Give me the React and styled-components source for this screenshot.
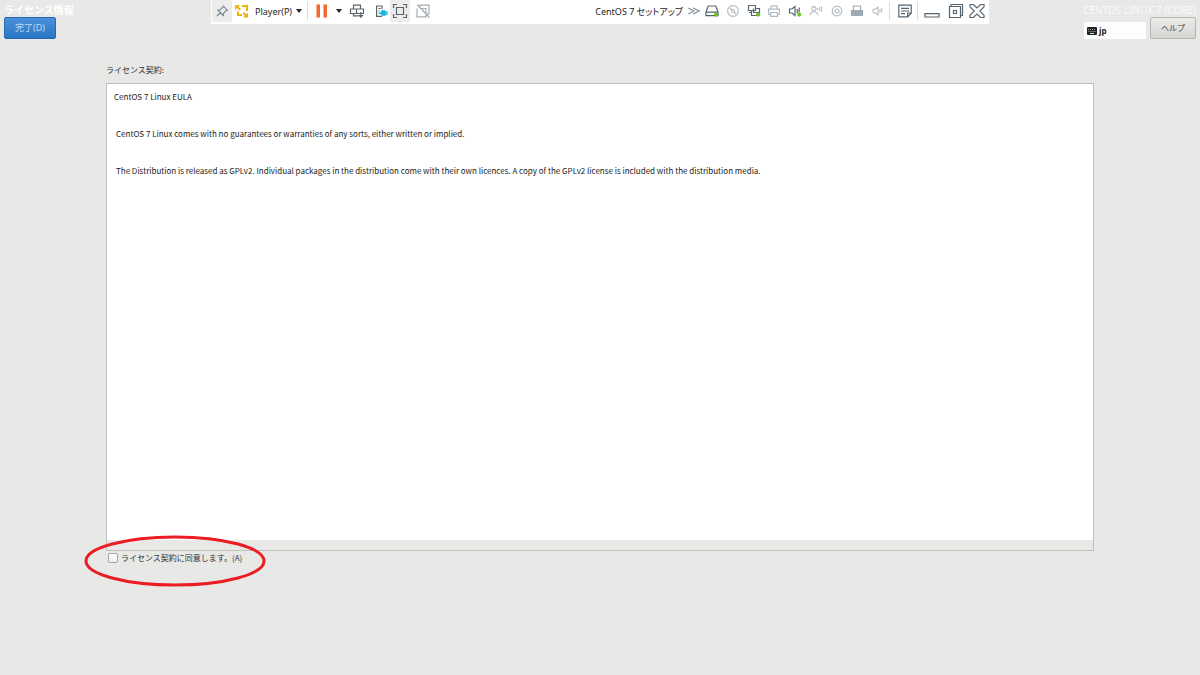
import React, { useState } from 'react';
import styled, { createGlobalStyle } from 'styled-components';

const GlobalStyle = createGlobalStyle`
  * {
    box-sizing: border-box;
  }
  body {
    margin: 0;
    background-color: #e8e8e6;
    font-family: 'Noto Sans', 'Noto Sans CJK JP', sans-serif;
    font-size: 8px;
    color: #2e3436;
  }
  button {
    font-family: inherit;
    cursor: pointer;
  }
`;

const Page = styled.div`
  display: flex;
  flex-direction: column;
  min-height: 100vh;
`;

const Header = styled.header`
  display: grid;
  grid-template-columns: 211fr 778fr 211fr;
  align-items: start;
`;

const HeaderSide = styled.div`
  display: flex;
  flex-direction: column;
  align-items: ${(props) => (props.$end ? 'flex-end' : 'flex-start')};
  padding: 3px 4px 0;
`;

const SpokeTitle = styled.h1`
  margin: 0;
  height: 14px;
  font-size: 10px;
  line-height: 14px;
  font-weight: bold;
  color: #fff;
  white-space: nowrap;
`;

const ProductName = styled.div`
  height: 14px;
  font-size: 10px;
  line-height: 14px;
  color: #fbfbfb;
  white-space: nowrap;
`;

const HeaderActions = styled.div`
  display: flex;
  align-items: flex-end;
  gap: 4px;
`;

const PushButton = styled.button`
  height: 22px;
  width: ${(props) => (props.$primary ? '52px' : '46px')};
  padding: 0;
  font-size: ${(props) => (props.$primary ? '9px' : '8px')};
  line-height: 12px;
  border-radius: 2px;
  color: ${(props) => (props.$primary ? '#c3daf1' : '#3f4547')};
  border: 1px solid ${(props) => (props.$primary ? '#2767ab' : '#b4b4b0')};
  background: ${(props) =>
    props.$primary
      ? 'linear-gradient(#4a90d9, #2a76c6)'
      : 'linear-gradient(#ebebea, #d5d5d3)'};
`;

const LayoutButton = styled.button`
  display: flex;
  align-items: center;
  gap: 2px;
  width: 62px;
  height: 17px;
  padding: 0 3px;
  border: none;
  border-radius: 1px;
  background-color: #fdfdfd;
  font-size: 8px;
  font-weight: bold;
  line-height: 12px;
  color: #222;
`;

const Toolbar = styled.div`
  display: flex;
  justify-content: space-between;
  height: 24px;
  padding: 0 1px;
  background-color: #fff;
`;

const ToolGroup = styled.div`
  display: flex;
  align-items: center;
  height: 22px;
`;

const DeviceGroup = styled(ToolGroup)`
  justify-content: space-between;
  width: 182px;
`;

const ToolButton = styled.button`
  display: flex;
  align-items: center;
  justify-content: center;
  flex: none;
  width: ${(props) => props.$width || 16}px;
  height: 22px;
  padding: 0;
  border: none;
  border-radius: 1px;
  background-color: ${(props) => (props.$active ? '#ececec' : 'transparent')};
`;

const PlayerButton = styled.button`
  display: flex;
  align-items: center;
  gap: 4px;
  height: 22px;
  padding: 0 5px 0 4px;
  border: none;
  background: none;
  font-size: 9px;
  color: #222;
`;

const VmName = styled.span`
  margin-right: 1px;
  font-size: 9px;
  font-feature-settings: 'palt';
  color: #222;
  white-space: nowrap;
`;

const Divider = styled.span`
  width: 1px;
  height: 18px;
  margin: 0 ${(props) => props.$gap}px;
  background-color: #dcdcdc;
`;

const Content = styled.main`
  display: flex;
  flex: 1;
  flex-direction: column;
  padding: 25px 106px 110px;
  font-family: 'Noto Sans CJK JP', sans-serif;
`;

const SectionLabel = styled.h2`
  margin: 0 0 7px;
  font-size: 8px;
  line-height: 12px;
  font-weight: normal;
`;

const LicenseFrame = styled.section`
  display: flex;
  flex: 1;
  flex-direction: column;
  border: 1px solid #c0c0bd;
`;

const LicenseText = styled.div`
  flex: 1;
  padding: 7px;
  background-color: #fff;
  color: #1a1a1a;
`;

const Paragraph = styled.p`
  margin: 0 0 25px;
  padding-left: ${(props) => (props.$indent ? '2px' : '0')};
  line-height: 12px;
`;

const ScrollTrack = styled.div`
  height: 10px;
  background-color: #e8e8e6;
`;

const AgreeRow = styled.div`
  position: relative;
  display: flex;
  align-self: flex-start;
  align-items: center;
  gap: 3px;
  height: 14px;
  padding-left: 2px;
`;

const Checkbox = styled.input`
  appearance: none;
  width: 10px;
  height: 10px;
  margin: 0;
  border: 1px solid #a3a39f;
  border-radius: 2px;
  background: linear-gradient(#fff, #f0f0ef);
  &:checked {
    background: #4a90d9;
  }
`;

const AgreeLabel = styled.label`
  font-size: 8px;
  line-height: 12px;
  white-space: nowrap;
`;

const Highlight = styled.svg`
  position: absolute;
  top: -16px;
  left: -22px;
  pointer-events: none;
`;

const DARK = '#566570';
const LIGHT = '#b4bcc3';
const GREEN = '#6cc31c';

const Icon = ({ size = 16, color = DARK, children }) => (
  <svg width={size} height={size} viewBox="0 0 16 16" fill="none" stroke={color} strokeWidth="1.2" aria-hidden="true">
    {children}
  </svg>
);

const Caret = () => (
  <svg width="6" height="4" viewBox="0 0 6 4" aria-hidden="true">
    <path d="M0 0h6L3 4z" fill="#222" />
  </svg>
);

const Dot = () => <circle cx="12.2" cy="11.6" r="2.1" fill={GREEN} stroke="none" />;

const PinIcon = () => (
  <Icon color="#77838e">
    <path d="M9.3 3.2l4 4-1.3.6-2.4 2.4-.4 2.3-5.3-5.3 2.3-.4 2.4-2.4zM6.2 9.9L3 13" />
  </Icon>
);

const ArrowsIcon = () => (
  <Icon color="#efb310">
    <g fill="#efb310" stroke="none">
      <path d="M1 2h5L4.500 3.500 7 6 5.500 7.500 3 5 1 7zM14 14.500H9l1.700-1.700L8.500 10.600l1.600-1.600 2.200 2.200L14 9.500z" />
      <path d="M8 2h6v6h-2V4H8zM3 8.500h2V11h3v2H3z" />
    </g>
  </Icon>
);

const PauseIcon = () => (
  <Icon>
    <path d="M2.500 1.500H6v13H2.500zM9.500 1.500H13v13H9.500z" fill="#f26a2e" stroke="none" />
  </Icon>
);

const SendKeysIcon = () => (
  <Icon>
    <path d="M4.500 6V2.200h7V6M1.500 6h6v4.500h-6zM7.500 6h7v4.500h-7zM4.500 10.500v2.300h5M11.800 9v4.500" />
    <path d="M9 12h5.600l-2.800 3z" fill={DARK} stroke="none" />
  </Icon>
);

const RemovableIcon = () => (
  <Icon>
    <path d="M9 6V3H3.6v10.400H9M5.500 5.500h2M5.500 8h1" />
    <path d="M6 9.500h2.500V7.400H12v1.300h2.400v1H12v1h2.400v1H12v.900H8.500v-1.800H6z" fill="#12b5da" stroke="#12b5da" strokeWidth=".6" />
  </Icon>
);

const FullscreenIcon = () => (
  <Icon>
    <path d="M1.500 5V1.500H5M11 1.500h3.500V5M14.500 11v3.500H11M5 14.500H1.500V11M4.500 4.500h7v7h-7z" />
  </Icon>
);

const UnityIcon = () => (
  <Icon color="#a5adb4">
    <path d="M5 5V2.200h9V11h-2.500M2 5.500v8.300h9V5.500H6M2 1.500l12.500 13" />
  </Icon>
);

const ChevronsIcon = () => (
  <Icon size={14} color="#7d8890">
    <path d="M1.500 4.500L8 8l-6.500 3.500M7 4.500L14 8l-7 3.500" />
  </Icon>
);

const DiskIcon = () => (
  <Icon>
    <path d="M4.200 3h7.600L14 9v3.600H2V9zM2 9.200h12" />
    <Dot />
  </Icon>
);

const DiscIcon = () => (
  <Icon color={LIGHT}>
    <circle cx="8" cy="8" r="5.400" />
    <circle cx="8" cy="8" r="1.500" />
    <path d="M5 5l2 2M9 9l2 2" />
  </Icon>
);

const NetworkIcon = () => (
  <Icon>
    <path d="M2.500 2.500h7v5h-7zM5.500 7.500v5h8V5.500H9.500M5.500 9.500H3M7.500 5.500v4h6" />
    <Dot />
  </Icon>
);

const PrinterIcon = () => (
  <Icon color={LIGHT}>
    <path d="M5 6V2.800h6V6M4.500 11.500H2.600V6.200h10.800v5.300h-1.900M4.600 9.500h6.800v3.800H4.600z" />
  </Icon>
);

const SoundIcon = ({ active }) => (
  <Icon color={active ? DARK : LIGHT} size={active ? 16 : 14}>
    <path d="M2.500 6h2.500L8 3.500v9L5 10H2.500zM10.200 6v4M12.200 4.500v5" />
    {active && <Dot />}
  </Icon>
);

const VoiceIcon = () => (
  <Icon color={LIGHT} size={14}>
    <circle cx="5.600" cy="5.400" r="2.400" />
    <path d="M1.200 13c0-3 1.600-4.200 4.400-4.200s4.400 1.200 4.400 4.200M10 4.500v2.500M12.200 3.500v4.500M14.400 2.500v6.500" />
  </Icon>
);

const CameraIcon = () => (
  <Icon color={LIGHT}>
    <circle cx="8" cy="8" r="4.800" />
    <circle cx="8" cy="8" r="2" />
  </Icon>
);

const FloppyIcon = () => (
  <Icon color="#9fa9b1">
    <path d="M4.500 7V3h7v4" />
    <path d="M2.500 7.500h11v5h-11z" fill="#9fa9b1" />
  </Icon>
);

const NoteIcon = () => (
  <Icon>
    <path d="M1.800 2.200h12.400v8l-3.400 3.600h-9zM14 10h-3.400v3.600M4 5.300h8M4 8h8M4 10.700h4" />
  </Icon>
);

const MinimizeIcon = () => (
  <Icon>
    <path d="M1 10.600h14v3.400H1z" />
  </Icon>
);

const RestoreIcon = () => (
  <Icon>
    <path d="M1.500 3.500h11v11h-11zM3 3.500v-2h11.500v11h-2M5.500 7.500h3v3h-3z" />
  </Icon>
);

const CloseIcon = () => (
  <Icon>
    <path d="M1 1.500h3.400L8 5l3.600-3.500H15v2.300L10.800 8l4.200 4.200v2.300h-3.400L8 11l-3.600 3.500H1v-2.300L5.200 8 1 3.800z" />
  </Icon>
);

const KeyboardIcon = () => (
  <svg width="10" height="8" viewBox="0 0 10 8" aria-hidden="true">
    <rect width="10" height="8" rx="1" fill="#222" />
    <path d="M1 2.500h8M1.500 4.500h7" stroke="#aaa" strokeDasharray="1 1" />
    <path d="M3 6.500h4" stroke="#ddd" />
  </svg>
);

const devices = [
  { label: 'Hard Disk', icon: <DiskIcon /> },
  { label: 'CD/DVD', icon: <DiscIcon /> },
  { label: 'Network Adapter', icon: <NetworkIcon /> },
  { label: 'Printer', icon: <PrinterIcon /> },
  { label: 'Sound Card', icon: <SoundIcon active /> },
  { label: 'Voice', icon: <VoiceIcon /> },
  { label: 'Camera', icon: <CameraIcon /> },
  { label: 'Removable Drive', icon: <FloppyIcon /> },
  { label: 'Audio', icon: <SoundIcon /> },
];

const PlayerToolbar = () => (
  <Toolbar>
    <ToolGroup>
      <ToolButton $width={20} $active aria-label="Pin"><PinIcon /></ToolButton>
      <ToolButton $width={19} aria-label="Player"><ArrowsIcon /></ToolButton>
      <PlayerButton>Player(P)<Caret /></PlayerButton>
      <Divider $gap={0} />
      <ToolButton $width={28} aria-label="Pause"><PauseIcon /></ToolButton>
      <ToolButton aria-label="Power options" $width={6}><Caret /></ToolButton>
      <ToolButton $width={30} aria-label="Ctrl+Alt+Del"><SendKeysIcon /></ToolButton>
      <ToolButton $width={18} aria-label="Removable devices"><RemovableIcon /></ToolButton>
      <ToolButton $width={20} $active aria-label="Full screen"><FullscreenIcon /></ToolButton>
      <ToolButton $width={26} aria-label="Unity"><UnityIcon /></ToolButton>
    </ToolGroup>
    <ToolGroup>
      <VmName>CentOS 7 セットアップ</VmName>
      <ToolButton $width={20} aria-label="Hide devices"><ChevronsIcon /></ToolButton>
      <DeviceGroup>
        {devices.map((device) => (
          <ToolButton key={device.label} aria-label={device.label}>{device.icon}</ToolButton>
        ))}
      </DeviceGroup>
      <Divider $gap={3} />
      <ToolButton $width={24} aria-label="Messages"><NoteIcon /></ToolButton>
      <Divider $gap={0} />
      <ToolButton $width={28} aria-label="Minimize"><MinimizeIcon /></ToolButton>
      <ToolButton $width={20} aria-label="Restore"><RestoreIcon /></ToolButton>
      <ToolButton $width={22} aria-label="Close"><CloseIcon /></ToolButton>
    </ToolGroup>
  </Toolbar>
);

const App = () => {
  const [agreed, setAgreed] = useState(false);

  return (
    <Page>
      <GlobalStyle />
      <Header>
        <HeaderSide>
          <SpokeTitle>ライセンス情報</SpokeTitle>
          <PushButton $primary>完了(D)</PushButton>
        </HeaderSide>
        <PlayerToolbar />
        <HeaderSide $end>
          <ProductName>CENTOS LINUX 7 (CORE)</ProductName>
          <HeaderActions>
            <LayoutButton><KeyboardIcon />jp</LayoutButton>
            <PushButton>ヘルプ</PushButton>
          </HeaderActions>
        </HeaderSide>
      </Header>
      <Content>
        <SectionLabel>ライセンス契約:</SectionLabel>
        <LicenseFrame>
          <LicenseText>
            <Paragraph>CentOS 7 Linux EULA</Paragraph>
            <Paragraph $indent>
              CentOS 7 Linux comes with no guarantees or warranties of any sorts, either written or implied.
            </Paragraph>
            <Paragraph $indent>
              The Distribution is released as GPLv2. Individual packages in the distribution come with their own
              licences. A copy of the GPLv2 license is included with the distribution media.
            </Paragraph>
          </LicenseText>
          <ScrollTrack />
        </LicenseFrame>
        <AgreeRow>
          <Checkbox
            type="checkbox"
            id="agree"
            checked={agreed}
            onChange={(e) => setAgreed(e.target.checked)}
          />
          <AgreeLabel htmlFor="agree">ライセンス契約に同意します。(A)</AgreeLabel>
          <Highlight width="182" height="52" viewBox="0 0 182 52" aria-hidden="true">
            <ellipse cx="91" cy="26" rx="89" ry="24" fill="none" stroke="#ec1c24" strokeWidth="3" />
          </Highlight>
        </AgreeRow>
      </Content>
    </Page>
  );
};

export default App;
